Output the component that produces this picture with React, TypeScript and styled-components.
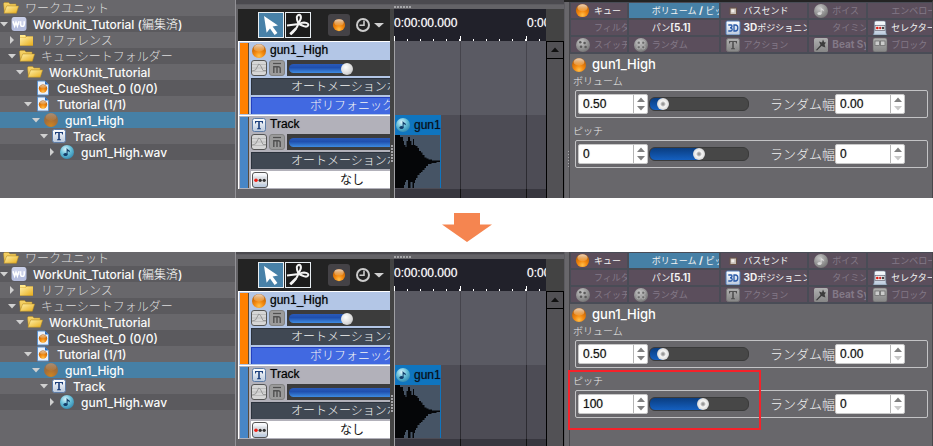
import React from "react";
import styled, { createGlobalStyle, css } from "styled-components";

const UI = '"Inter", "Noto Sans CJK JP", sans-serif';
const ARIAL = '"Liberation Sans", "Noto Sans CJK JP", sans-serif';

const GlobalStyle = createGlobalStyle`
  * { box-sizing: border-box; }
  body { margin: 0; background: #fff; font-family: ${UI}; font-size: 12px; }
  button, input { font: inherit; color: inherit; margin: 0; padding: 0; border: 0; background: none; }
  ul { list-style: none; margin: 0; padding: 0; }
  svg { display: block; flex: none; }
`;

/* ---------- icons ---------- */

const Paints = styled.svg`
  position: absolute;
  width: 0;
  height: 0;
`;

const SharedPaints = () => (
  <Paints aria-hidden>
    <defs>
      <radialGradient id="orb" cx="0.5" cy="0.85" r="0.8">
        <stop offset="0" stopColor="#ffc04a" />
        <stop offset="0.4" stopColor="#f48a10" />
        <stop offset="1" stopColor="#b85a00" />
      </radialGradient>
      <linearGradient id="gloss" x1="0" y1="0" x2="0" y2="1">
        <stop offset="0" stopColor="#fff" stopOpacity="0.95" />
        <stop offset="1" stopColor="#ffd9a0" stopOpacity="0.25" />
      </linearGradient>
      <radialGradient id="orbDim" cx="0.5" cy="0.9" r="0.9">
        <stop offset="0" stopColor="#cf8420" />
        <stop offset="0.5" stopColor="#a86f35" />
        <stop offset="1" stopColor="#8b6b50" />
      </radialGradient>
      <linearGradient id="folder" x1="0" y1="0" x2="1" y2="1">
        <stop offset="0" stopColor="#fff0a8" />
        <stop offset="1" stopColor="#e8ae1c" />
      </linearGradient>
      <radialGradient id="aqua" cx="0.4" cy="0.3" r="0.8">
        <stop offset="0" stopColor="#d8f4fa" />
        <stop offset="0.5" stopColor="#62bcd6" />
        <stop offset="1" stopColor="#2a7fa8" />
      </radialGradient>
      <radialGradient id="grey" cx="0.4" cy="0.3" r="0.8">
        <stop offset="0" stopColor="#c4c4c4" />
        <stop offset="1" stopColor="#6d6d6d" />
      </radialGradient>
      <linearGradient id="plate" x1="0" y1="0" x2="0" y2="1">
        <stop offset="0" stopColor="#ffffff" />
        <stop offset="1" stopColor="#b9c8dc" />
      </linearGradient>
      <linearGradient id="greyPlate" x1="0" y1="0" x2="0" y2="1">
        <stop offset="0" stopColor="#b0b0b0" />
        <stop offset="1" stopColor="#868686" />
      </linearGradient>
    </defs>
  </Paints>
);

const Orb = ({ dim = false, size = 16 }: { dim?: boolean; size?: number }) => (
  <svg width={size} height={size} viewBox="0 0 16 16">
    <circle cx="8" cy="8" r="7" fill={dim ? "url(#orbDim)" : "url(#orb)"} />
    <ellipse cx="8" cy="5" rx="5.4" ry="3.7" fill="url(#gloss)" opacity={dim ? 0.25 : 0.8} />
  </svg>
);

const FolderOpen = () => (
  <svg width="16" height="16" viewBox="0 0 16 16">
    <path d="M0.5 3.5 L1.5 2.5 H5.5 L7 4 H13 V6 H4 L1.5 13 Z" fill="#f3cf62" stroke="#b98d20" strokeWidth="0.5" />
    <path d="M3.6 6 H15.6 L13.4 13.2 H1 Z" fill="url(#folder)" stroke="#b98d20" strokeWidth="0.5" />
  </svg>
);

const FolderClosed = () => (
  <svg width="16" height="16" viewBox="0 0 16 16">
    <path d="M1 3 H6 L7.5 4.6 H14 V13.4 H1 Z" fill="#d49b12" />
    <path d="M1 5.4 H6.5 L8 4.4 H14 V13.4 H1 Z" fill="url(#folder)" />
    <path d="M1 3 H6 L7 4.3 L6 5.2 H1 Z" fill="#ffe98c" />
  </svg>
);

const WorkUnitIcon = () => (
  <svg width="16" height="16" viewBox="0 0 16 16">
    <rect x="0.5" y="1" width="15" height="14" rx="3" fill="#b4bdde" />
    <rect x="1" y="1" width="14" height="8" rx="3" fill="#c9cfe8" />
    <path d="M2 5.3 L3.6 10.2 L5 6.3 L6.4 10.2 L8 5.3 M9.6 5.3 V8.5 Q9.6 10.3 11.4 10.3 Q13.2 10.3 13.2 8.5 V5.3" fill="none" stroke="#fff" strokeWidth="1.5" />
  </svg>
);

const CueSheetIcon = () => (
  <svg width="16" height="16" viewBox="0 0 16 16">
    <path d="M2.5 1 H10 L13.5 4.5 V15 H2.5 Z" fill="#e9f1fb" stroke="#5b8fc9" />
    <path d="M10 1 L13.5 4.5 H10 Z" fill="#2d6bb5" />
    <circle cx="8" cy="8.6" r="4.2" fill="url(#orb)" />
    <ellipse cx="8" cy="6.8" rx="3" ry="1.8" fill="url(#gloss)" opacity="0.7" />
  </svg>
);

const TrackIcon = ({ grey = false }: { grey?: boolean }) => (
  <svg width="16" height="16" viewBox="0 0 16 16">
    <rect x="1.5" y="1.5" width="13" height="13" rx="2" fill={grey ? "url(#greyPlate)" : "url(#plate)"} stroke={grey ? "#777" : "#5c7ba6"} />
    <path
      d="M4 4 H12 V6.6 H11.2 L10.6 5.1 H8.8 V11.1 L10 11.5 V12.2 H6 V11.5 L7.2 11.1 V5.1 H5.4 L4.8 6.6 H4 Z"
      fill={grey ? "#505050" : "#1c3f7c"}
    />
  </svg>
);

const NoteIcon = ({ grey = false }: { grey?: boolean }) => (
  <svg width="16" height="16" viewBox="0 0 16 16">
    <circle cx="8" cy="8" r="7" fill={grey ? "url(#grey)" : "url(#aqua)"} />
    <path d="M7.6 10.4 V4 L9 5.4 Q11 6 11.2 8.6 Q10 7.2 8.6 7.2 V10.4 Z" fill={grey ? "#d8d8d8" : "#123c68"} />
    <ellipse cx="6.5" cy="10.5" rx="2.1" ry="1.6" fill={grey ? "#d8d8d8" : "#123c68"} />
  </svg>
);

const DiceIcon = ({ square = false }: { square?: boolean }) => (
  <svg width="16" height="16" viewBox="0 0 16 16">
    <circle cx="8" cy="8" r="7" fill="url(#grey)" />
    {square ? (
      <g fill="#6a6a6a" stroke="#dcdcdc" strokeWidth="0.5">
        <rect x="4.2" y="4.2" width="3" height="3" rx="0.8" />
        <rect x="8.8" y="4.2" width="3" height="3" rx="0.8" />
        <rect x="4.2" y="8.8" width="3" height="3" rx="0.8" />
        <rect x="8.8" y="8.8" width="3" height="3" rx="0.8" />
      </g>
    ) : (
      <g fill="#5a5a5a">
        <circle cx="5.3" cy="5.3" r="1.3" />
        <circle cx="9.6" cy="6" r="1.3" />
        <circle cx="6" cy="9.8" r="1.3" />
        <circle cx="10.6" cy="10" r="1.3" />
      </g>
    )}
  </svg>
);

const BusIcon = () => (
  <svg width="16" height="16" viewBox="0 0 16 16">
    <rect x="5" y="5" width="6.5" height="6.5" fill="#c9c0b8" stroke="#6b5548" />
    <rect x="6.3" y="6.3" width="3" height="3" fill="#f2eee8" />
  </svg>
);

const ThreeDIcon = () => (
  <svg width="16" height="16" viewBox="0 0 16 16">
    <rect x="1" y="1" width="14" height="14" rx="1.5" fill="url(#plate)" stroke="#4c78b4" />
    <path d="M3.3 5 H6.3 Q7 5 7 6 Q7 7.8 5 7.8 Q7.2 7.8 7.2 9.6 Q7.2 11 6 11 H3.3 M9 5 V11 H10.4 Q12.8 11 12.8 8 Q12.8 5 10.4 5 Z" fill="none" stroke="#2859a8" strokeWidth="1.3" />
  </svg>
);

const SelectorIcon = () => (
  <svg width="16" height="16" viewBox="0 0 16 16">
    <path d="M2.5 2 Q3 1 4 1 H12 Q13 1 13.5 2 L14 13 L15 15 H1 L2 13 Z" fill="url(#plate)" stroke="#6c7f96" strokeWidth="0.6" />
    <rect x="3" y="5.5" width="10" height="5" fill="#eee" stroke="#667" strokeWidth="0.7" />
    <circle cx="5.3" cy="8" r="1.3" fill="#e01b12" />
    <circle cx="8.2" cy="8" r="1.2" fill="#c33" />
    <circle cx="11" cy="8" r="1.2" fill="#444" />
  </svg>
);

const BeatIcon = () => (
  <svg width="16" height="16" viewBox="0 0 16 16">
    <rect x="1" y="1" width="14" height="14" rx="1.5" fill="url(#greyPlate)" />
    <path d="M3 13 L7.5 8 L6 4.5 L9 5.5 L10 2.5 L11.2 5.2 L13 5.6 L11.6 7.6 L12.4 10.4 L9.6 9.4 L8.6 9 L4 13.6 Z" fill="#3c3c3c" />
  </svg>
);

const BlockIcon = () => (
  <svg width="16" height="16" viewBox="0 0 16 16">
    <rect x="1" y="1" width="14" height="14" rx="2" fill="url(#greyPlate)" stroke="#666" strokeWidth="0.6" />
    <rect x="3" y="4" width="4.4" height="4.6" fill="#ccc" stroke="#666" strokeWidth="0.7" />
    <rect x="8.6" y="4" width="4.4" height="4.6" fill="#ccc" stroke="#666" strokeWidth="0.7" />
  </svg>
);

const CurveIcon = () => (
  <svg width="16" height="16" viewBox="0 0 16 16">
    <rect x="0.5" y="0.5" width="15" height="15" rx="2.5" fill="#d6d6d6" stroke="#555" />
    <path d="M1 4.5 H15 M1 8 H15 M1 11.5 H15" stroke="#bcbcbc" />
    <path d="M1 11 L4.5 10 L7.8 4 L9.5 5.4 L12 10.5 H15" fill="none" stroke="#999" />
  </svg>
);

const MuteIcon = () => (
  <svg width="16" height="16" viewBox="0 0 16 16">
    <rect x="0.5" y="0.5" width="15" height="15" rx="2.5" fill="#9b9b9b" stroke="#828282" />
    <path d="M4 3.5 H12" stroke="#505050" strokeWidth="1.2" />
    <path d="M4.8 13 V6.8 H9.2 Q11.2 6.8 11.2 8.6 V13 M8 7 V13" fill="none" stroke="#505050" strokeWidth="1.4" />
  </svg>
);

const DotsIcon = () => (
  <svg width="16" height="16" viewBox="0 0 16 16">
    <rect x="0.5" y="0.5" width="15" height="15" rx="2.5" fill="url(#plate)" stroke="#555" />
    <rect x="1" y="4.6" width="14" height="7" fill="#dcdfe4" />
    <circle cx="4" cy="8.3" r="1.8" fill="#ee1c12" />
    <circle cx="8.2" cy="8.3" r="1.6" fill="#333" />
    <circle cx="12.2" cy="8.3" r="1.6" fill="#333" />
  </svg>
);

const PointerIcon = () => (
  <svg width="24" height="24" viewBox="0 0 24 24">
    <path d="M5 3 L19 12.6 L13.6 13.6 L18.4 20 L15.6 22 L11 15.6 L7.6 19.8 Z" fill="#fff" />
  </svg>
);

const ScissorsIcon = () => (
  <svg width="24" height="24" viewBox="0 0 24 24" fill="none" stroke="#f4f4f4" strokeWidth="2">
    <path d="M1 12.6 L13 11 Q15.4 9.4 18 9.4 Q22.4 9.8 22.4 12 Q21.6 14.2 18.4 13.4 Q15.6 12.4 13 11" />
    <path d="M4.6 21.5 Q10.6 16.6 12.4 10.5 Q10.6 7 10.8 4 Q11.8 1.2 14 2 Q15.8 4 14.2 7 L12.4 10.5" />
    <path d="M4 21 L10 15.4" strokeWidth="2.2" />
  </svg>
);

const ClockIcon = () => (
  <svg width="16" height="16" viewBox="0 0 16 16" fill="none" stroke="#ccc">
    <circle cx="8" cy="8" r="6" strokeWidth="2" />
    <path d="M9 3.5 V8.2 H4.5" strokeWidth="1.6" />
  </svg>
);

const Triangle = ({ dir, width = 8, color = "#d0d0d0" }: { dir: "up" | "down" | "right"; width?: number; color?: string }) => (
  <svg width={width} height="8" viewBox="0 0 8 8" preserveAspectRatio="none">
    <path d={dir === "down" ? "M0 2 H8 L4 6.4 Z" : dir === "up" ? "M0 6 H8 L4 1.6 Z" : "M2 0 L6 4 L2 8 Z"} fill={color} />
  </svg>
);

const Waveform = () => (
  <svg width="45" height="53" viewBox="0 0 45 53">
    <path
      fill="#050608"
      d="M0 0 H5 V2 H8 V6 H9 V10 H10.5 V12 H11.5 V6 H13 V2 H15 V6 H16.4 V10 H18 V4 H19 V10 H20.5 V11 H22.5 V13 H24 V16 H26 V17.5 H27.5 V20 H29.5 V22.5 H31.5 V23.5 H33.5 V24.5 H37 V25.5 H45 V27 H41.5 V28 H36.5 V29 H33 V31 H31 V33 H29.5 V35 H27.5 V37 H26 V38 H24.5 V40 H22.5 V43 H21 V45 H20 V48 H19 V53 H17.5 V47 H15.5 V53 H13 V45 H11 V47 H10 V50 H9 V53 H0 Z"
    />
  </svg>
);

/* ---------- page ---------- */

const Page = styled.main`
  height: 100vh;
  overflow: hidden;
  background: #fff;
`;

const Shot = styled.section<{ $clip?: boolean }>`
  position: relative;
  overflow: hidden;
  background: #68676b;
  ${(p) => p.$clip && css`& > div:first-child { margin-top: -2px; }`}
`;

const Workspace = styled.div`
  display: grid;
  grid-template-columns: 236px minmax(0, 328fr) minmax(0, 369fr);
  min-height: 198px;
`;

const Between = styled.div`
  display: flex;
  justify-content: center;
  padding: 15px 0 10px;
`;

/* ---------- tree ---------- */

const Tree = styled.nav`
  border-right: 1px solid #929196;
  overflow: hidden;
`;

const TreeRow = styled.li<{ $level: number; $selected?: boolean; $root?: boolean }>`
  display: flex;
  align-items: center;
  height: 16px;
  padding-left: ${(p) => p.$level * 8}px;
  color: #f4f4f4;
  background: #68676b;
  &:nth-child(even) { background: #5b5a5e; }
  && { ${(p) => p.$selected && "background: #4680a6;"} }
`;

const Toggle = styled.button`
  width: 8px;
  height: 16px;
  display: flex;
  align-items: center;
  justify-content: center;
`;

const RowIcon = styled.span`
  margin-left: 3px;
  width: 16px;
`;

const RowLabel = styled.span<{ $dim?: boolean }>`
  margin-left: 6px;
  padding-top: 2px;
  line-height: 16px;
  white-space: nowrap;
  font-size: 12px;
  font-weight: ${(p) => (p.$dim ? 300 : 500)};
  color: ${(p) => (p.$dim ? "#dcdcdc" : "#fafafa")};
`;

const Thin = styled.span`
  font-weight: 300;
`;

type Node = { level: number; arrow?: "down" | "right" | "none"; icon: React.ReactNode; label: React.ReactNode; dim?: boolean; selected?: boolean };

const nodes: Node[] = [
  { level: 0, icon: <FolderOpen />, label: "ワークユニット", dim: true },
  { level: 0, arrow: "down", icon: <WorkUnitIcon />, label: <>WorkUnit_Tutorial (<Thin>編集済</Thin>)</> },
  { level: 1, arrow: "right", icon: <FolderClosed />, label: "リファレンス", dim: true },
  { level: 1, arrow: "down", icon: <FolderOpen />, label: "キューシートフォルダー", dim: true },
  { level: 2, arrow: "down", icon: <FolderOpen />, label: "WorkUnit_Tutorial" },
  { level: 3, arrow: "none", icon: <CueSheetIcon />, label: "CueSheet_0 (0/0)" },
  { level: 3, arrow: "down", icon: <CueSheetIcon />, label: "Tutorial (1/1)" },
  { level: 4, arrow: "down", icon: <Orb dim />, label: "gun1_High", selected: true },
  { level: 5, arrow: "down", icon: <TrackIcon />, label: "Track" },
  { level: 6, arrow: "right", icon: <NoteIcon />, label: "gun1_High.wav" },
];

const WorkUnitTree = () => (
  <Tree>
    <ul>
      {nodes.map((n, i) => (
        <TreeRow key={i} $level={n.level} $selected={n.selected}>
          {n.arrow && <Toggle aria-label="toggle">{n.arrow !== "none" && <Triangle dir={n.arrow} />}</Toggle>}
          <RowIcon>{n.icon}</RowIcon>
          <RowLabel $dim={n.dim}>{n.label}</RowLabel>
        </TreeRow>
      ))}
    </ul>
  </Tree>
);

/* ---------- editor ---------- */

const Editor = styled.div`
  display: grid;
  grid-template-rows: 5px 4px minmax(0, 1fr);
  background: #646367;
`;

const TopStrip = styled.div`
  background: #4b4a4f;
  border-bottom: 1px solid #5c5b60;
`;

const HGrip = styled.div`
  margin: 1px 0 1px 158px;
  width: 18px;
  background: repeating-linear-gradient(90deg, #a5a5a8 0 2px, transparent 2px 3px);
`;

const EditorBody = styled.div`
  display: grid;
  grid-template-columns: 152px 4px minmax(0, 1fr) 18px;
  margin-left: 2px;
`;

const Headers = styled.div`
  overflow: hidden;
  font-family: ${ARIAL};
`;

const Toolbar = styled.div`
  display: flex;
  align-items: center;
  height: 32px;
  padding-left: 20px;
  background: #232323;
`;

const ToolButton = styled.button<{ $active?: boolean }>`
  width: 26px;
  height: 26px;
  margin-right: 1px;
  border: 1px solid #e8eef2;
  background: ${(p) => (p.$active ? "#4881a8" : "#1b1b1b")};
`;

const OrbButton = styled.button`
  display: flex;
  align-items: center;
  justify-content: center;
  width: 22px;
  height: 22px;
  margin: 0 5px 0 16px;
  border-radius: 3px;
  background: #444246;
`;

const PlainButton = styled.button`
  display: flex;
  margin-right: 3px;
`;

const IconButton = styled.button`
  display: block;
  width: 16px;
  height: 16px;
`;

const TrackBlock = styled.article<{ $color: string; $bg: string }>`
  display: grid;
  grid-template-columns: 9px minmax(0, 1fr);
  column-gap: 2px;
  height: 74px;
  padding: 1px 0 1px 1px;
  border-top: 1px solid #fff;
  border-left: 1px solid #fff;
  background: ${(p) => p.$bg};
  &::before { content: ""; background: ${(p) => p.$color}; border-right: 1px solid #5a4a3a; }
`;

const TrackBody = styled.div`
  display: flex;
  flex-direction: column;
  justify-content: space-between;
`;

const TrackTitle = styled.div`
  display: flex;
  align-items: center;
  gap: 3px;
  height: 15px;
  color: #000;
  font-size: 12px;
  line-height: 15px;
  text-shadow: 0 0 1px rgba(0, 0, 0, 0.5);
`;

const TrackControls = styled.div`
  display: flex;
  gap: 2px;
  height: 16px;
`;

const VolumeLane = styled.div`
  flex: 1;
  min-width: 0;
  overflow: hidden;
  padding: 4px 2px;
  background: #3c3c3c;
`;

const VolumeRange = styled.input<{ $full?: boolean }>`
  appearance: none;
  display: block;
  width: ${(p) => (p.$full ? 180 : 120)}px;
  height: 9px;
  border-radius: 5px;
  background: ${(p) =>
    p.$full
      ? "linear-gradient(#2a5ab8, #1f4fae 40%, #3f8be0)"
      : "linear-gradient(90deg, transparent 60px, #3c3c3c 60px), linear-gradient(#2a5ab8, #1f4fae 40%, #3f8be0)"};
  &::-webkit-slider-thumb {
    appearance: none;
    width: 12px;
    height: 12px;
    border-radius: 50%;
    background: radial-gradient(circle at 40% 35%, #fff, #d8d8d8 60%, #999);
  }
`;

const ModeButton = styled.button<{ $tone: "dark" | "blue" | "white" }>`
  display: flex;
  align-items: center;
  height: 17px;
  overflow: hidden;
  white-space: nowrap;
  font-size: 12px;
  line-height: 14px;
  font-weight: ${(p) => (p.$tone === "white" ? 400 : 300)};
  text-align: left;
  padding-left: ${(p) => ({ dark: 39, blue: 58, white: 0 })[p.$tone]}px;
  color: ${(p) => (p.$tone === "white" ? "#111" : "#f4f4f4")};
  background: ${(p) => ({ dark: "#404853", blue: "#4169e1", white: "#fff" })[p.$tone]};
  border-top: 1px solid ${(p) => ({ dark: "#2b323c", blue: "#2440c0", white: "#fff" })[p.$tone]};
  border-left: 1px solid ${(p) => ({ dark: "#2b323c", blue: "#2440c0", white: "#fff" })[p.$tone]};
  & > span { margin-left: 72px; }
`;

const VSplitter = styled.div`
  background: #434343;
  padding: 136px 1px 0;
  &::after { content: ""; display: block; height: 18px; background: repeating-linear-gradient(#a5a5a8 0 2px, transparent 2px 3px); }
`;

const Lanes = styled.div`
  overflow: hidden;
  font-family: ${ARIAL};
  display: flex;
  flex-direction: column;
`;

const Ruler = styled.div`
  display: flex;
  height: 32px;
  overflow: hidden;
  color: #fff;
  font-size: 12px;
  line-height: 28px;
  background:
    repeating-linear-gradient(90deg, #fff 0 1px, transparent 1px 66px) 0 100% / 100% 5px no-repeat,
    repeating-linear-gradient(90deg, #fff 0 1px, transparent 1px 13px) 0 100% / 66px 2px repeat-x,
    #21212a;
`;

const RulerMark = styled.span`
  flex: none;
  width: 133px;
  text-shadow: 0 0 1px rgba(255, 255, 255, 0.6);
`;

const Lane = styled.div<{ $tone: string; $line: string; $grow?: boolean }>`
  ${(p) => (p.$grow ? "flex: 1;" : "height: 74px;")}
  background:
    repeating-linear-gradient(90deg, transparent 0 65px, ${(p) => p.$line} 65px 66px),
    ${(p) => p.$tone};
  border-left: 1px solid #a0a0a4;
`;

const Clip = styled.div`
  width: 46px;
  height: 73px;
  background: #465465;
  border-right: 1px solid #0f75bf;
`;

const ClipTitle = styled.div`
  display: flex;
  align-items: center;
  gap: 3px;
  height: 20px;
  margin-right: -1px;
  background: #0f75bf;
  color: #0a0f16;
  overflow: hidden;
  white-space: nowrap;
  text-shadow: 0 0 1px rgba(0, 0, 0, 0.5);
`;

const Scroll = styled.div`
  display: grid;
  grid-template-rows: 32px 18px 1fr;
  background: #434343;
`;

const ScrollUp = styled.button`
  display: flex;
  align-items: center;
  justify-content: center;
  border: 1px solid #000;
  background: #525155;
`;

const ScrollTrack = styled.div`
  border: solid #000;
  border-width: 0 1px;
  background: #525155;
`;

const TimelineEditor = () => (
  <Editor>
    <TopStrip />
    <HGrip />
    <EditorBody>
      <Headers>
        <Toolbar>
          <ToolButton $active aria-label="select"><PointerIcon /></ToolButton>
          <ToolButton aria-label="cut"><ScissorsIcon /></ToolButton>
          <OrbButton aria-label="cue"><Orb size={14} /></OrbButton>
          <PlainButton aria-label="time"><ClockIcon /></PlainButton>
          <PlainButton aria-label="more"><Triangle dir="down" width={10} /></PlainButton>
        </Toolbar>
        <TrackBlock $color="#ff8000" $bg="#b3c6e6">
          <TrackBody>
            <TrackTitle><Orb />gun1_High</TrackTitle>
            <TrackControls>
              <IconButton aria-label="curve"><CurveIcon /></IconButton>
              <IconButton aria-label="mute"><MuteIcon /></IconButton>
              <VolumeLane><VolumeRange type="range" aria-label="cue volume" defaultValue={48} /></VolumeLane>
            </TrackControls>
            <ModeButton $tone="dark">オートメーションボ</ModeButton>
            <ModeButton $tone="blue">ポリフォニック</ModeButton>
          </TrackBody>
        </TrackBlock>
        <TrackBlock $color="#4886c6" $bg="#b2b1ba">
          <TrackBody>
            <TrackTitle><TrackIcon />Track</TrackTitle>
            <TrackControls>
              <IconButton aria-label="curve"><CurveIcon /></IconButton>
              <IconButton aria-label="mute"><MuteIcon /></IconButton>
              <VolumeLane><VolumeRange $full type="range" aria-label="track volume" defaultValue={100} /></VolumeLane>
            </TrackControls>
            <ModeButton $tone="dark">オートメーションボ</ModeButton>
            <ModeButton $tone="white"><DotsIcon /><span>なし</span></ModeButton>
          </TrackBody>
        </TrackBlock>
      </Headers>
      <VSplitter />
      <Lanes>
        <Ruler>
          <RulerMark>0:00:00.000</RulerMark>
          <RulerMark>0:00:00.000</RulerMark>
        </Ruler>
        <Lane $tone="#5a5a63" $line="#45444c" />
        <Lane $tone="#4d4c55" $line="#2c2b31">
          <Clip>
            <ClipTitle><NoteIcon />gun1</ClipTitle>
            <Waveform />
          </Clip>
        </Lane>
        <Lane $tone="#38373f" $line="#111" $grow />
      </Lanes>
      <Scroll>
        <span />
        <ScrollUp aria-label="scroll up"><Triangle dir="up" color="#111" /></ScrollUp>
        <ScrollTrack />
      </Scroll>
    </EditorBody>
  </Editor>
);

/* ---------- inspector ---------- */

const Inspector = styled.div`
  display: grid;
  grid-template-columns: 6px minmax(0, 1fr);
  border-top: 2px solid #232323;
  border-right: 1px solid #48474b;
`;

const InspectorEdge = styled.div`
  border-left: 1px solid #5c5b60;
  border-right: 1px solid #48474b;
  padding: 149px 0 0 3px;
  &::after { content: ""; display: block; height: 18px; background: repeating-linear-gradient(#a5a5a8 0 1px, transparent 1px 3px); }
`;

const Tabs = styled.div`
  display: grid;
  grid-template-columns: 56fr 90fr 87fr 57fr 64fr;
  grid-auto-rows: 15px;
  gap: 2px;
  padding: 1px 0 2px 1px;
  background: #494c56;
`;

const Tab = styled.button<{ $active?: boolean; $off?: boolean }>`
  display: flex;
  align-items: center;
  gap: 3px;
  padding-left: 4px;
  overflow: hidden;
  white-space: nowrap;
  text-align: left;
  font-size: 9px;
  line-height: 15px;
  background: ${(p) => (p.$active ? "#4680a6" : "#5b4e5c")};
  color: ${(p) => (p.$off ? "#837987" : "#f2f2f2")};
  & > i { flex: none; width: 16px; }
  & b { font-size: 10px; font-weight: 700; }
`;

const tabs: { icon?: React.ReactNode; label: React.ReactNode; active?: boolean; off?: boolean }[] = [
  { icon: <Orb size={15} />, label: "キュー" },
  { label: <>ボリューム <b>/</b> ピッチ</>, active: true },
  { icon: <BusIcon />, label: "バスセンド" },
  { icon: <NoteIcon grey />, label: "ボイス", off: true },
  { label: "エンベロープ", off: true },
  { label: "フィルタ", off: true },
  { label: <>パン<b>[5.1]</b></> },
  { icon: <ThreeDIcon />, label: <><b>3D</b>ポジショニング</> },
  { label: "タイミング", off: true },
  { icon: <SelectorIcon />, label: "セレクター" },
  { icon: <DiceIcon />, label: "スイッチ", off: true },
  { icon: <DiceIcon square />, label: "ランダム", off: true },
  { icon: <TrackIcon grey />, label: "アクション", off: true },
  { icon: <BeatIcon />, label: <b>Beat Sync</b>, off: true },
  { icon: <BlockIcon />, label: "ブロック", off: true },
];

const ObjectTitle = styled.h2`
  display: flex;
  align-items: center;
  gap: 5px;
  margin: 2px 0 0 1px;
  height: 17px;
  font-size: 13px;
  font-weight: 500;
  line-height: 17px;
  color: #fff;
`;

const ParamGroup = styled.section`
  padding: 0 4px 0 3px;
`;

const ParamName = styled.h3`
  margin: 0;
  height: 17px;
  font-size: 10px;
  font-weight: 300;
  line-height: 16px;
  color: #ececec;
`;

const ParamBox = styled.div`
  display: flex;
  align-items: center;
  height: 28px;
  margin: 0 0 5px 2px;
  padding-left: 2px;
  border: 1px solid #c3c3c5;
  border-radius: 2px;
  color: #f2f2f2;
`;

const SpinBox = styled.span`
  display: flex;
  width: 70px;
  height: 20px;
  flex: none;
  background: #fff;
  border: 1px solid #c8c8c8;
  border-radius: 2px;
`;

const SpinInput = styled.input`
  flex: 1;
  min-width: 0;
  padding-left: 4px;
  font-family: ${ARIAL};
  font-size: 12px;
  line-height: 18px;
  color: #111;
  text-shadow: 0 0 1px rgba(0, 0, 0, 0.5);
`;

const SpinButtons = styled.span`
  display: flex;
  flex-direction: column;
  justify-content: center;
  align-items: center;
  width: 14px;
  border-left: 1px solid #b5b5b5;
`;

const SpinButton = styled.button`
  display: block;
  height: 8px;
`;

const ParamRange = styled.input`
  appearance: none;
  width: 100px;
  height: 14px;
  flex: none;
  margin-left: 1px;
  border-radius: 6px;
  border: 1px solid #3a3a3a;
  background: linear-gradient(#0a3d80, #1560c0) 0 0 / var(--fill) 100% no-repeat, #474747;
  &::-webkit-slider-thumb {
    appearance: none;
    width: 12px;
    height: 12px;
    border-radius: 50%;
    background: radial-gradient(circle at 50% 50%, #999 0 1px, #f6f6f6 3px, #e2e2e2 5px, #aaa);
  }
`;

const RandomLabel = styled.label`
  margin-left: 21px;
  font-size: 13px;
  font-weight: 300;
  line-height: 18px;
  white-space: nowrap;
`;

const Spin = ({ id, value, atMin }: { id: string; value: string; atMin?: boolean }) => (
  <SpinBox>
    <SpinInput id={id} aria-label={id} defaultValue={value} />
    <SpinButtons>
      <SpinButton aria-label="increase"><Triangle dir="up" color="#808080" /></SpinButton>
      <SpinButton aria-label="decrease"><Triangle dir="down" color={atMin ? "#c9c9c9" : "#808080"} /></SpinButton>
    </SpinButtons>
  </SpinBox>
);

type ParamProps = { id: string; name: string; value: string; random: string; min: number; max: number };

const Param = ({ id, name, value, random, min, max }: ParamProps) => {
  const fill = ((Number(value) - min) / (max - min)) * 86 + 7;
  return (
    <ParamGroup>
      <ParamName>{name}</ParamName>
      <ParamBox>
        <Spin id={id} value={value} />
        <ParamRange
          type="range"
          aria-label={name}
          min={min}
          max={max}
          step={0.1}
          defaultValue={value}
          style={{ "--fill": `${fill}%` } as React.CSSProperties}
        />
        <RandomLabel htmlFor={`${id}-random`}>ランダム幅</RandomLabel>
        <Spin id={`${id}-random`} value={random} atMin />
      </ParamBox>
    </ParamGroup>
  );
};

const CueInspector = ({ id, pitch }: { id: string; pitch: string }) => (
  <Inspector>
    <InspectorEdge />
    <div>
      <Tabs role="tablist">
        {tabs.map((t, i) => (
          <Tab key={i} role="tab" $active={t.active} $off={t.off}>
            <i>{t.icon}</i>
            <span>{t.label}</span>
          </Tab>
        ))}
      </Tabs>
      <ObjectTitle><Orb />gun1_High</ObjectTitle>
      <Param id={`${id}-volume`} name="ボリューム" value="0.50" random="0.00" min={0} max={6} />
      <Param id={`${id}-pitch`} name="ピッチ" value={pitch} random="0" min={-1200} max={1200} />
    </div>
  </Inspector>
);

const Highlight = styled.div`
  position: absolute;
  left: 568px;
  top: 118px;
  width: 193px;
  height: 60px;
  border: 2px solid #f5222a;
`;

const Screen = ({ id, pitch }: { id: string; pitch: string }) => (
  <Workspace>
    <WorkUnitTree />
    <TimelineEditor />
    <CueInspector id={id} pitch={pitch} />
  </Workspace>
);

export default function App() {
  return (
    <Page>
      <GlobalStyle />
      <SharedPaints />
      <Shot>
        <Screen id="before" pitch="0" />
      </Shot>
      <Between>
        <svg width="50" height="29" viewBox="0 0 50 29">
          <path d="M12 0 H38 V11.5 H50 L25 29 L0 11.5 H12 Z" fill="#f58550" />
        </svg>
      </Between>
      <Shot $clip>
        <Screen id="after" pitch="100" />
        <Highlight />
      </Shot>
    </Page>
  );
}
